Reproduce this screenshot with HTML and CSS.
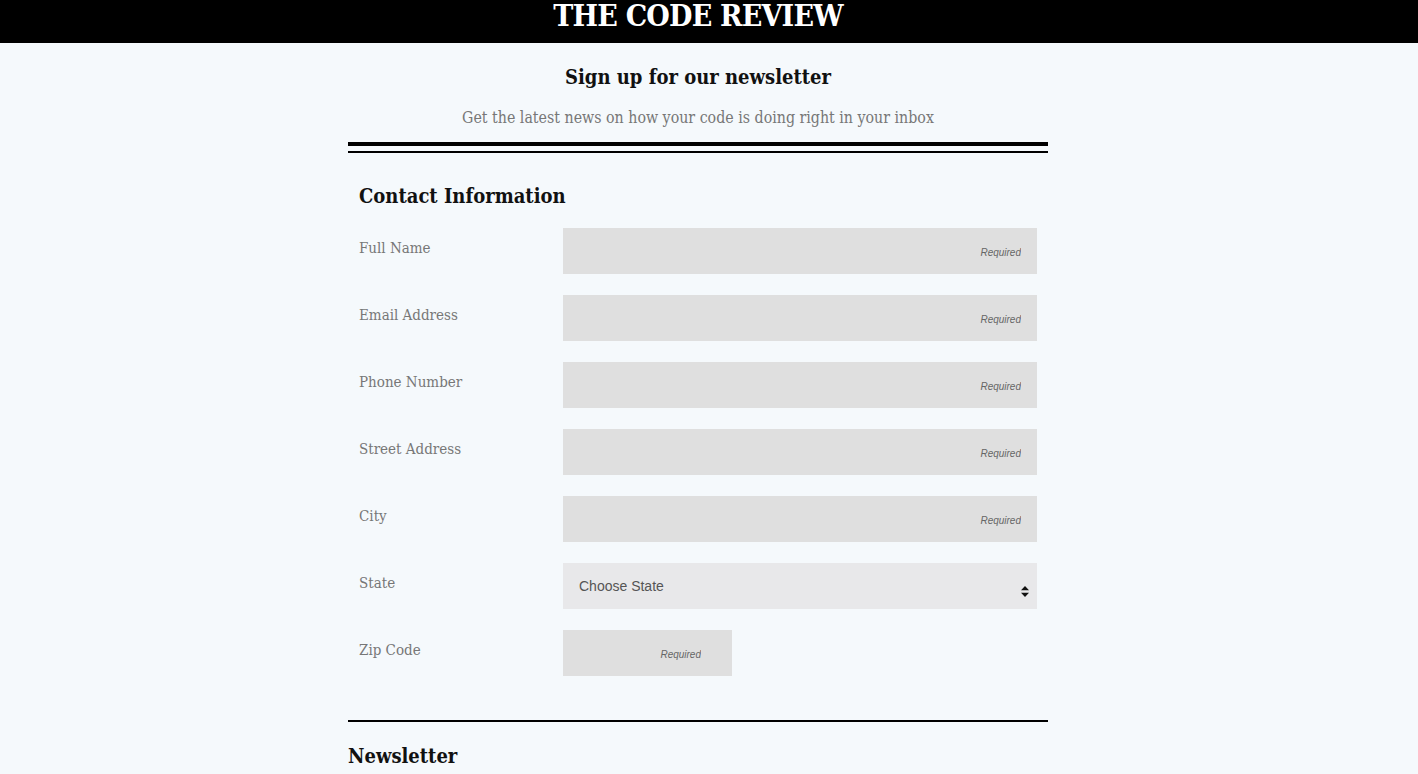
FILE: index.html
```html
<!DOCTYPE html>
<html lang="en">
<head>
<meta charset="utf-8">
<title>The Code Review</title>
<link rel="stylesheet" href="styles.css">
</head>
<body>
<header class="masthead">
  <h1 class="masthead-title">THE CODE REVIEW</h1>
</header>
<main class="page">
  <div class="container">
    <section class="intro">
      <h2 class="intro-title">Sign up for our newsletter</h2>
      <p class="intro-text">Get the latest news on how your code is doing right in your inbox</p>
    </section>
    <div class="double-rule"><span class="rule-thick"></span><span class="rule-thin"></span></div>
    <form class="signup">
      <fieldset class="contact">
        <h3 class="section-title">Contact Information</h3>
        <div class="row">
          <label class="label" for="name">Full Name</label>
          <input class="field" id="name" type="text" placeholder="Required">
        </div>
        <div class="row">
          <label class="label" for="email">Email Address</label>
          <input class="field" id="email" type="email" placeholder="Required">
        </div>
        <div class="row">
          <label class="label" for="phone">Phone Number</label>
          <input class="field" id="phone" type="tel" placeholder="Required">
        </div>
        <div class="row">
          <label class="label" for="street">Street Address</label>
          <input class="field" id="street" type="text" placeholder="Required">
        </div>
        <div class="row">
          <label class="label" for="city">City</label>
          <input class="field" id="city" type="text" placeholder="Required">
        </div>
        <div class="row">
          <label class="label" for="state">State</label>
          <div class="select-wrap">
            <select class="select" id="state">
              <option>Choose State</option>
            </select>
            <svg class="select-arrows" width="8" height="11" viewBox="0 0 8 11" aria-hidden="true">
              <path d="M4 0 L8 4.3 H0 Z" fill="#111"/>
              <path d="M4 11 L8 6.7 H0 Z" fill="#111"/>
            </svg>
          </div>
        </div>
        <div class="row row-last">
          <label class="label" for="zip">Zip Code</label>
          <div class="zip-cell">
            <input class="field field-zip" id="zip" type="text" placeholder="Required">
          </div>
        </div>
      </fieldset>
      <div class="rule"></div>
      <h3 class="newsletter-title">Newsletter</h3>
    </form>
  </div>
</main>
</body>
</html>
```

FILE: styles.css
```css
html, body {
  margin: 0;
  padding: 0;
}
body {
  background: #f5f9fc;
  font-family: "DejaVu Serif Condensed", "DejaVu Serif", serif;
  color: #111;
  height: 774px;
  overflow: hidden;
}
.masthead {
  background: #000;
  height: 43px;
  overflow: hidden;
  text-align: center;
}
.masthead-title {
  margin: 0;
  color: #fff;
  font-size: 30px;
  letter-spacing: -0.8px;
  line-height: 30px;
  padding-top: 1px;
  font-weight: bold;
  padding-right: 22px;
}
.page {
  padding-right: 22px;
}
.container {
  width: 700px;
  margin: 0 auto;
}
.intro {
  text-align: center;
  padding-top: 20px;
}
.intro-title {
  margin: 0;
  font-size: 20px;
  line-height: 28px;
  font-weight: bold;
  color: #111;
}
.intro-text {
  margin: 17px 0 0;
  font-size: 15.8px;
  line-height: 20px;
  color: #777;
}
.double-rule {
  display: flex;
  flex-direction: column;
  gap: 5px;
  margin-top: 14px;
}
.rule-thick {
  display: block;
  height: 4px;
  background: #000;
}
.rule-thin {
  display: block;
  height: 2px;
  background: #000;
}
.signup {
  margin: 0;
}
.contact {
  border: 0;
  margin: 0;
  padding: 29px 11px 44px;
  min-width: 0;
}
.section-title {
  margin: 0 0 18px;
  font-size: 20px;
  line-height: 28px;
  font-weight: bold;
  color: #111;
}
.row {
  display: grid;
  grid-template-columns: 204px 1fr;
  margin-bottom: 21px;
}
.row-last {
  margin-bottom: 0;
}
.label {
  font-size: 15px;
  line-height: 20px;
  color: #777;
  padding-top: 10px;
}
.field {
  box-sizing: border-box;
  width: 100%;
  height: 46px;
  border: 0;
  border-radius: 0;
  background: #dfdfdf;
  padding: 0 16px;
  font-family: "Liberation Sans", Arial, sans-serif;
  font-size: 14px;
  color: #333;
  outline: none;
}
.field::placeholder {
  color: #666;
  font-style: italic;
  font-size: 10px;
  text-align: right;
}
.zip-cell {
  display: block;
}
.field-zip {
  width: 169px;
  padding-right: 31px;
}
.select-wrap {
  position: relative;
}
.select {
  box-sizing: border-box;
  width: 100%;
  height: 46px;
  border: 0;
  border-radius: 0;
  background: #e8e8ea;
  padding: 0 16px;
  font-family: "Liberation Sans", Arial, sans-serif;
  font-size: 14px;
  color: #555;
  appearance: none;
  -webkit-appearance: none;
  outline: none;
}
.select-arrows {
  position: absolute;
  right: 8px;
  top: 23px;
}
.rule {
  height: 2px;
  background: #000;
}
.newsletter-title {
  margin: 20px 0 0;
  font-size: 20px;
  line-height: 28px;
  font-weight: bold;
  color: #111;
}
```
